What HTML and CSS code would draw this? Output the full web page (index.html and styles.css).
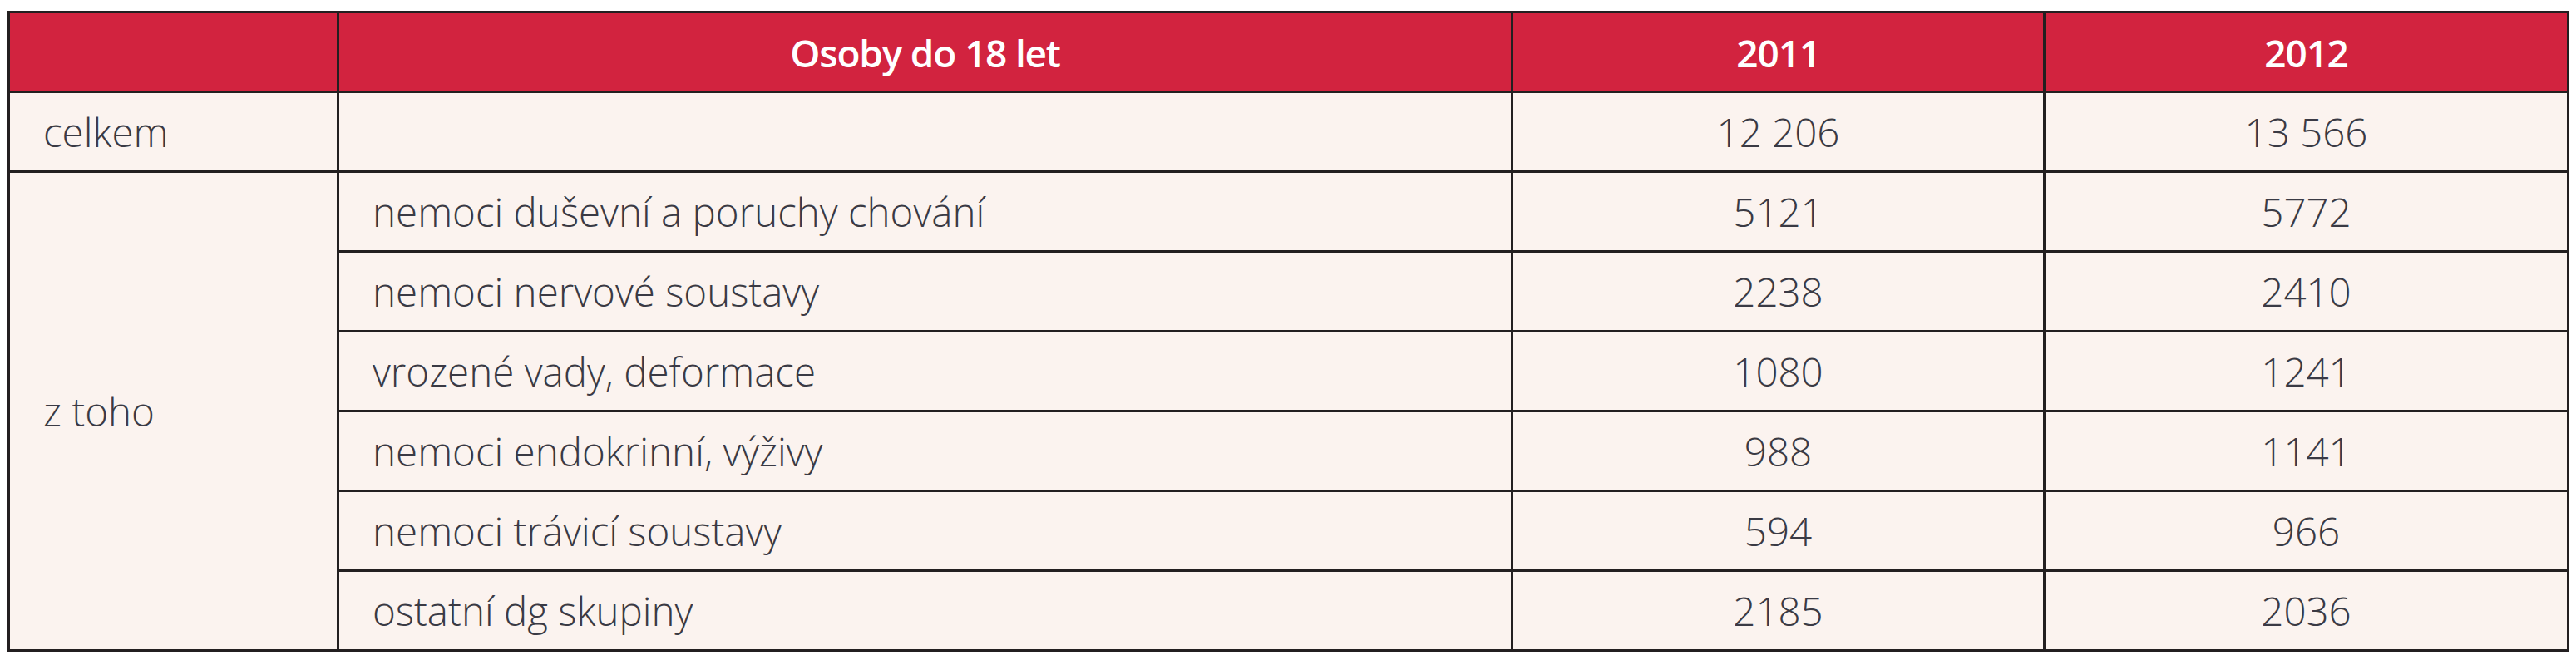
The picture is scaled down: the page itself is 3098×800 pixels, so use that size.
FILE: index.html
```html
<!DOCTYPE html>
<html lang="cs">
<head>
<meta charset="utf-8">
<title>Osoby do 18 let</title>
<link rel="stylesheet" href="styles.css">
</head>
<body>
<table class="data">
  <colgroup>
    <col class="c1"><col class="c2"><col class="c3"><col class="c4">
  </colgroup>
  <thead>
    <tr class="head">
      <th></th>
      <th>Osoby do 18 let</th>
      <th>2011</th>
      <th>2012</th>
    </tr>
  </thead>
  <tbody>
    <tr>
      <td class="label">celkem</td>
      <td></td>
      <td class="num">12 206</td>
      <td class="num">13 566</td>
    </tr>
    <tr>
      <td class="label" rowspan="6">z toho</td>
      <td class="label">nemoci duševní a poruchy chování</td>
      <td class="num">5121</td>
      <td class="num">5772</td>
    </tr>
    <tr>
      <td class="label">nemoci nervové soustavy</td>
      <td class="num">2238</td>
      <td class="num">2410</td>
    </tr>
    <tr>
      <td class="label">vrozené vady, deformace</td>
      <td class="num">1080</td>
      <td class="num">1241</td>
    </tr>
    <tr>
      <td class="label">nemoci endokrinní, výživy</td>
      <td class="num">988</td>
      <td class="num">1141</td>
    </tr>
    <tr>
      <td class="label">nemoci trávicí soustavy</td>
      <td class="num">594</td>
      <td class="num">966</td>
    </tr>
    <tr>
      <td class="label">ostatní dg skupiny</td>
      <td class="num">2185</td>
      <td class="num">2036</td>
    </tr>
  </tbody>
</table>
</body>
</html>
```

FILE: styles.css
```css
html, body {
  margin: 0;
  padding: 0;
  background: #ffffff;
}

body {
  padding: 13px 0 0 9px;
  font-family: "Open Sans", "Noto Sans", "Liberation Sans", sans-serif;
}

.data {
  border-collapse: collapse;
  width: 3078px;
  table-layout: fixed;
  background: #fbf3ef;
  color: #3a3a44;
  font-size: 47.5px;
  font-weight: 300;
}

.c1 { width: 396px; }
.c2 { width: 1412px; }
.c3 { width: 640px; }
.c4 { width: 630px; }

.data th,
.data td {
  border: 3px solid #231f20;
  height: 93px;
  padding: 0;
  vertical-align: middle;
}

.head th {
  background: #d2233f;
  color: #ffffff;
  font-size: 46px;
  font-weight: 600;
  text-align: center;
  height: 93px;
  letter-spacing: -1.2px;
}

.label {
  text-align: left;
  padding-left: 40px !important;
}

.num {
  text-align: center;
}
```
